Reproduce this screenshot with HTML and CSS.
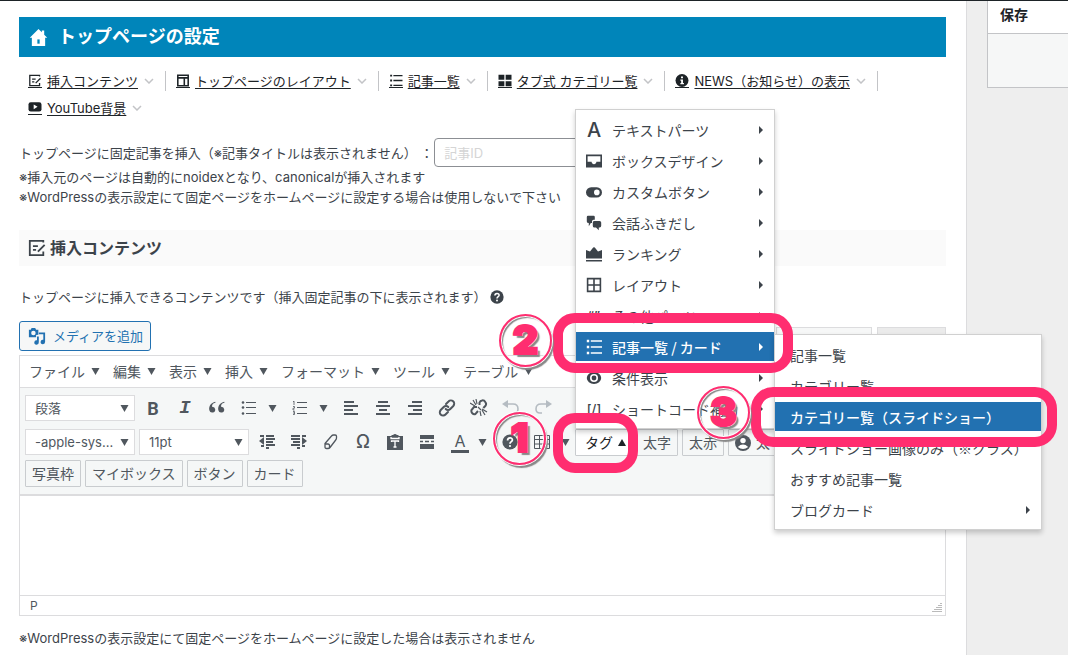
FILE: index.html
```html
<!DOCTYPE html>
<html lang="ja">
<head>
<meta charset="utf-8">
<title>トップページの設定</title>
<link rel="stylesheet" href="styles.css">
</head>
<body>
<svg class="sprite" aria-hidden="true">
  <symbol id="home" viewBox="0 0 20 20"><path d="M10 1 .8 10.2H3V19h14v-8.800h2.200L16 7V2.500h-2.500v2z" fill="currentColor"/><path d="M8.800 12h2.400v4.500H8.800z" fill="#0085ba"/></symbol>
  <symbol id="note" viewBox="0 0 20 20"><g fill="none" stroke="currentColor" stroke-width="2"><path d="M17 4V2H2v16h15v-4M5.500 8H11M5.500 12H9"/><path d="m11 14 7.500-7.500"/></g></symbol>
  <symbol id="layout" viewBox="0 0 20 20"><path d="M2 2h16v16H2zM2 6h16M12 6v12" fill="none" stroke="currentColor" stroke-width="2.400"/></symbol>
  <symbol id="list" viewBox="0 0 20 20"><path d="M6 2.500h14M6 10h14M6 17.500h14" stroke="currentColor" stroke-width="2"/><path d="M1 1h3v3H1zM1 8.500h3v3H1zM1 16h3v3H1z" fill="currentColor"/></symbol>
  <symbol id="grid" viewBox="0 0 20 20"><path d="M0 1h9v8H0zM11 1h9v8h-9zM0 11h9v8H0zM11 11h9v8h-9z" fill="currentColor"/></symbol>
  <symbol id="info" viewBox="0 0 20 20"><circle cx="10" cy="10" r="10" fill="currentColor"/><path d="M8.500 4h3v2.500h-3zM7.500 8.500h4V14H13v1.700H7.500V14h1.200v-3.700H7.500z" fill="#fff"/></symbol>
  <symbol id="tube" viewBox="0 0 20 20"><rect y="2" width="20" height="14" rx="3.500" fill="currentColor"/><path d="m8 5.500 6 3.500-6 3.500z" fill="#fff"/></symbol>
  <symbol id="chev" viewBox="0 0 10 6"><path d="m1 1 4 4 4-4" fill="none" stroke="#c3c4c7" stroke-width="1.500"/></symbol>
  <symbol id="down" viewBox="0 0 8 7"><path d="M0 0h8L4 7z" fill="currentColor"/></symbol>
  <symbol id="up" viewBox="0 0 8 7"><path d="M0 7h8L4 0z" fill="currentColor"/></symbol>
  <symbol id="right" viewBox="0 0 4 8"><path d="M0 0v8l4-4z" fill="currentColor"/></symbol>
  <symbol id="help" viewBox="0 0 20 20"><circle cx="10" cy="10" r="9.500" fill="currentColor"/><path d="M7 8c0-4 6-4 6-.6 0 2.200-3 2-3 4.800" fill="none" stroke="#fff" stroke-width="2.200"/><circle cx="10" cy="15" r="1.400" fill="#fff"/></symbol>
  <symbol id="media" viewBox="0 0 20 20"><path fill-rule="evenodd" d="M1 3h2l1-2h4l1 2h2.500v5.500L9 9v2.500H1zM6 4.300a2.500 2.500 0 1 0 0 5 2.500 2.500 0 0 0 0-5z" fill="currentColor"/><path d="M12 6h7v10.500a2.500 2.500 0 1 1-2-2.300V8h-5zM10 10.500h2V17a2.500 2.500 0 1 1-2-2.300z" fill="currentColor"/></symbol>
  <symbol id="tray" viewBox="0 0 20 20"><path fill-rule="evenodd" d="M0 2h20v16H0zM2 4v7h5c0 4 6 4 6 0h5V4z" fill="currentColor"/></symbol>
  <symbol id="toggle" viewBox="0 0 20 20"><rect y="4" width="20" height="13" rx="6.500" fill="currentColor"/><circle cx="13.500" cy="10.500" r="3.500" fill="#fff"/></symbol>
  <symbol id="chat" viewBox="0 0 20 20"><path d="M2.500 1h7Q11 1 11 2.500V6H9.500Q7.500 6 7.500 8v2H6l-2.500 4V10Q1 10 1 8V2.500Q1 1 2.500 1zM10 7.500h7q2 0 2 2v4q0 2-2 2h-1V19l-3.500-3.500H10q-1.500 0-1.500-2v-4q0-2 1.500-2z" fill="currentColor"/></symbol>
  <symbol id="crown" viewBox="0 0 20 20"><path d="M0 5l5 2 3-4q2-3 4 0l3 4 5-2v10.500H0zM0 17.500h20v1.800H0z" fill="currentColor"/></symbol>
  <symbol id="window" viewBox="0 0 20 20"><path d="M2 2h16v16H2zM10 2v16M2 10h16" fill="none" stroke="currentColor" stroke-width="2"/></symbol>
  <symbol id="eye" viewBox="0 0 20 20"><ellipse cx="10" cy="10" rx="9" ry="7.500" fill="currentColor"/><circle cx="10" cy="10" r="5" fill="#fff"/><circle cx="10" cy="10" r="3" fill="currentColor"/></symbol>
  <symbol id="user" viewBox="0 0 20 20"><circle cx="10" cy="10" r="10" fill="currentColor"/><circle cx="10" cy="7" r="3.400" fill="#fff"/><path d="M3.500 15q6.500-6 13 0-6.500 5-13 0z" fill="#fff"/></symbol>
  <symbol id="quote" viewBox="0 0 20 20"><path d="M8.500 4C5 5 4.500 7 4.500 8.500a3.300 3.300 0 1 1-3 4C.5 8 3.500 4 8 3zM18.500 4c-3.500 1-4 3-4 4.500a3.300 3.300 0 1 1-3 4C10.500 8 13.500 4 18 3z" fill="currentColor"/></symbol>
  <symbol id="ul" viewBox="0 0 16 16"><path d="M5 2.500h10M5 7.500h10M5 13.500h10" stroke="currentColor"/><circle cx="2" cy="2.500" r="1.300" fill="currentColor"/><circle cx="2" cy="7.500" r="1.300" fill="currentColor"/><circle cx="2" cy="13.500" r="1.300" fill="currentColor"/></symbol>
  <symbol id="ol" viewBox="0 0 16 16"><path d="M5 2.500h10M5 7.500h10M5 13.500h10" stroke="currentColor"/><path d="m1 2 1-1v4M1 6.500h1.500v1.700H1V10h1.500M1 11.500h1.500v3H1M1 13h1.500" fill="none" stroke="currentColor" stroke-width=".8"/></symbol>
  <symbol id="al" viewBox="0 0 16 16"><path d="M1 2h10M1 6h14M1 10h9M1 14h14" stroke="currentColor" stroke-width="2"/></symbol>
  <symbol id="ac" viewBox="0 0 16 16"><path d="M3 2h10M1 6h14M4 10h8M1 14h14" stroke="currentColor" stroke-width="2"/></symbol>
  <symbol id="ar" viewBox="0 0 16 16"><path d="M5 2h10M1 6h14M6 10h9M1 14h14" stroke="currentColor" stroke-width="2"/></symbol>
  <symbol id="link" viewBox="0 0 18 18"><g fill="none" stroke="currentColor" stroke-width="2" stroke-linecap="round"><path d="m8 5 2.500-2.500a3.200 3.200 0 0 1 4.800 4.500l-3 3a3.200 3.200 0 0 1-4.600 0"/><path d="m10 13-2.500 2.500A3.200 3.200 0 0 1 2.700 11l3-3a3.200 3.200 0 0 1 4.600 0"/></g></symbol>
  <symbol id="unlink" viewBox="0 0 18 18"><g fill="none" stroke="currentColor" stroke-width="2"><path d="M9.500 6V3.500a3.200 3.200 0 0 1 5.800-.5 3.200 3.200 0 0 1 0 4l-2 2M8 12l-2.500 3A3.200 3.200 0 0 1 1.500 11l2.500-3h3"/><path d="m3 1 3 5M6 0l1 5M0 4l5 3M10 12l1 5M12 11l3 5M12 10l5 3M8 8l3 3" stroke-width="1.200"/></g></symbol>
  <symbol id="undo" viewBox="0 0 18 18"><path d="M5 5h6q5 0 5 5 0 4-4 4" fill="none" stroke="currentColor" stroke-width="1.600"/><path d="M6 1v8L0 5z" fill="currentColor"/></symbol>
  <symbol id="redo" viewBox="0 0 18 18"><path d="M13 5H7q-5 0-5 5 0 4 4 4h2" fill="none" stroke="currentColor" stroke-width="1.600"/><path d="M12 1v8l6-4z" fill="currentColor"/></symbol>
  <symbol id="outdent" viewBox="0 0 16 16"><path d="M1 2h4M7 2h8M7 5h9M7 8h7M7 11h9M2 12h3M7 14h3" stroke="currentColor" stroke-width="2"/><path d="M5 3v8L0 7z" fill="currentColor"/></symbol>
  <symbol id="indent" viewBox="0 0 16 16"><path d="M0 2h9M0 5h9M2 8h7M0 11h9M11 2h4M11 12h3M6 14h3" stroke="currentColor" stroke-width="2"/><path d="M11 3v8l5-4z" fill="currentColor"/></symbol>
  <symbol id="eraser" viewBox="0 0 16 16"><path d="M2 9.500 8.500 2q.8-1 2-1h1.700q1.300 0 1.300 1.300V4q0 1-.8 2L7 13.500q-.8 1-2 1H3.500q-1.500 0-1.500-1.500zM2 10h3q1.500 0 1.500 1.500V14" fill="none" stroke="currentColor" stroke-width="1.300"/></symbol>
  <symbol id="paste" viewBox="0 0 16 16"><path d="M0 2h4l1-1h1q2-2 4 0h1l1 1h4v14H0z" fill="currentColor"/><path d="M4 3v1.500h8V3M4.500 8V7h7v1M8 7v6.500M6.500 13h3" fill="none" stroke="#fff" stroke-width="1.300"/></symbol>
  <symbol id="more" viewBox="0 0 16 16"><path d="M1 1h14v4H1zM1 10h14v5H1z" fill="currentColor"/><path d="M1 7.500h3M6 7.500h4M12 7.500h3" stroke="currentColor" stroke-width="1.500"/></symbol>
  <symbol id="table" viewBox="0 0 16 16"><path d="M.5 1.500h15v13H.5zM.5 5.500h15M.5 10h15M5.500 1.500v13M10.500 1.500v13" fill="none" stroke="currentColor"/></symbol>
</svg>

<div class="page">
  <main class="main">
    <h1 class="title"><svg class="i20"><use href="#home"/></svg>トップページの設定</h1>

    <nav class="anchors">
      <a href="#insert"><svg class="i14"><use href="#note"/></svg><span>挿入コンテンツ</span><svg class="chev"><use href="#chev"/></svg></a>
      <a href="#layout-top"><svg class="i14"><use href="#layout"/></svg><span>トップページのレイアウト</span><svg class="chev"><use href="#chev"/></svg></a>
      <a href="#posts"><svg class="i14"><use href="#list"/></svg><span>記事一覧</span><svg class="chev"><use href="#chev"/></svg></a>
      <a href="#tabs"><svg class="i14"><use href="#grid"/></svg><span>タブ式 カテゴリー覧</span><svg class="chev"><use href="#chev"/></svg></a>
      <a href="#news"><svg class="i14"><use href="#info"/></svg><span>NEWS（お知らせ）の表示</span><svg class="chev"><use href="#chev"/></svg></a>
      <a href="#youtube"><svg class="i14"><use href="#tube"/></svg><span>YouTube背景</span><svg class="chev"><use href="#chev"/></svg></a>
    </nav>

    <div class="field">
      <label for="post-id">トップページに固定記事を挿入（※記事タイトルは表示されません） ：</label>
      <input id="post-id" type="text" placeholder="記事ID">
    </div>
    <p class="text">※挿入元のページは自動的にnoidexとなり、canonicalが挿入されます<br>※WordPressの表示設定にて固定ページをホームページに設定する場合は使用しないで下さい</p>

    <h2 class="section" id="insert"><svg class="i18"><use href="#note"/></svg>挿入コンテンツ</h2>
    <p class="text lead">トップページに挿入できるコンテンツです（挿入固定記事の下に表示されます）<svg class="i14"><use href="#help"/></svg></p>

    <div class="tools">
      <button class="media" type="button"><svg class="i18"><use href="#media"/></svg>メディアを追加</button>
      <div class="tabs"><button class="tab tab-on" type="button" aria-label="ビジュアル"></button><button class="tab" type="button" aria-label="テキスト"></button></div>
    </div>

    <div class="editor">
      <div class="menubar">
        <button type="button">ファイル<svg class="caret"><use href="#down"/></svg></button>
        <button type="button">編集<svg class="caret"><use href="#down"/></svg></button>
        <button type="button">表示<svg class="caret"><use href="#down"/></svg></button>
        <button type="button">挿入<svg class="caret"><use href="#down"/></svg></button>
        <button type="button">フォーマット<svg class="caret"><use href="#down"/></svg></button>
        <button type="button">ツール<svg class="caret"><use href="#down"/></svg></button>
        <button type="button">テーブル<svg class="caret"><use href="#down"/></svg></button>
      </div>

      <div class="toolbar">
        <div class="row">
          <div class="pick"><select aria-label="書式"><option>段落</option></select><svg class="caret"><use href="#down"/></svg></div>
          <div class="set">
            <button class="tool bold" type="button">B</button>
            <button class="tool italic" type="button">I</button>
            <button class="tool" type="button" aria-label="引用"><svg class="i18"><use href="#quote"/></svg></button>
            <button class="tool split" type="button" aria-label="箇条書き"><svg class="i16"><use href="#ul"/></svg><svg class="caret"><use href="#down"/></svg></button>
            <button class="tool split" type="button" aria-label="番号付きリスト"><svg class="i16"><use href="#ol"/></svg><svg class="caret"><use href="#down"/></svg></button>
            <button class="tool" type="button" aria-label="左寄せ"><svg class="i16"><use href="#al"/></svg></button>
            <button class="tool" type="button" aria-label="中央揃え"><svg class="i16"><use href="#ac"/></svg></button>
            <button class="tool" type="button" aria-label="右寄せ"><svg class="i16"><use href="#ar"/></svg></button>
            <button class="tool" type="button" aria-label="リンク"><svg class="i18"><use href="#link"/></svg></button>
            <button class="tool" type="button" aria-label="リンク解除"><svg class="i18"><use href="#unlink"/></svg></button>
            <button class="tool off" type="button" aria-label="取り消し"><svg class="i18"><use href="#undo"/></svg></button>
            <button class="tool off" type="button" aria-label="やり直し"><svg class="i18"><use href="#redo"/></svg></button>
          </div>
        </div>
        <div class="row">
          <div class="pick"><select aria-label="フォント"><option>-apple-sys...</option></select><svg class="caret"><use href="#down"/></svg></div>
          <div class="pick"><select aria-label="サイズ"><option>11pt</option></select><svg class="caret"><use href="#down"/></svg></div>
          <div class="set">
            <button class="tool" type="button" aria-label="インデント解除"><svg class="i16"><use href="#outdent"/></svg></button>
            <button class="tool" type="button" aria-label="インデント"><svg class="i16"><use href="#indent"/></svg></button>
            <button class="tool" type="button" aria-label="書式クリア"><svg class="i16"><use href="#eraser"/></svg></button>
            <button class="tool omega" type="button">Ω</button>
            <button class="tool" type="button" aria-label="貼り付け"><svg class="i16"><use href="#paste"/></svg></button>
            <button class="tool" type="button" aria-label="続きを読む"><svg class="i16"><use href="#more"/></svg></button>
            <button class="tool split" type="button"><span class="color">A</span><svg class="caret"><use href="#down"/></svg></button>
            <button class="tool" type="button" aria-label="ヘルプ"><svg class="i16"><use href="#help"/></svg></button>
            <button class="tool split" type="button" aria-label="表"><svg class="i16"><use href="#table"/></svg><svg class="caret"><use href="#down"/></svg></button>
          </div>
          <div class="drop">
            <button class="btn open" type="button">タグ<svg class="caret-up"><use href="#up"/></svg></button>
            <div class="menu main-menu">
              <button type="button"><b class="glyph-a">A</b>テキストパーツ<svg class="arrow"><use href="#right"/></svg></button>
              <button type="button"><svg class="i16"><use href="#tray"/></svg>ボックスデザイン<svg class="arrow"><use href="#right"/></svg></button>
              <button type="button"><svg class="i16"><use href="#toggle"/></svg>カスタムボタン<svg class="arrow"><use href="#right"/></svg></button>
              <button type="button"><svg class="i16"><use href="#chat"/></svg>会話ふきだし<svg class="arrow"><use href="#right"/></svg></button>
              <button type="button"><svg class="i16"><use href="#crown"/></svg>ランキング<svg class="arrow"><use href="#right"/></svg></button>
              <button type="button"><svg class="i16"><use href="#window"/></svg>レイアウト<svg class="arrow"><use href="#right"/></svg></button>
              <button type="button"><b class="code">“”</b>その他パーツ<svg class="arrow"><use href="#right"/></svg></button>
              <div class="drop">
                <button class="active" type="button"><svg class="i16"><use href="#list"/></svg>記事一覧 / カード<svg class="arrow"><use href="#right"/></svg></button>
                <div class="menu sub-menu">
                  <button type="button">記事一覧</button>
                  <button type="button">カテゴリー覧</button>
                  <button class="active" type="button">カテゴリー覧（スライドショー）</button>
                  <button type="button">スライドショー画像のみ（※クラス）</button>
                  <button type="button">おすすめ記事一覧</button>
                  <button type="button">ブログカード<svg class="arrow"><use href="#right"/></svg></button>
                </div>
              </div>
              <button type="button"><svg class="i16"><use href="#eye"/></svg>条件表示<svg class="arrow"><use href="#right"/></svg></button>
              <button type="button"><b class="code">[/]</b>ショートコード補助<svg class="arrow"><use href="#right"/></svg></button>
            </div>
          </div>
          <button class="btn" type="button">太字</button>
          <button class="btn" type="button">太赤</button>
          <button class="btn" type="button"><svg class="i16"><use href="#user"/></svg>太字</button>
        </div>
        <div class="row">
          <button class="btn" type="button">写真枠</button>
          <button class="btn" type="button">マイボックス</button>
          <button class="btn" type="button">ボタン</button>
          <button class="btn" type="button">カード</button>
        </div>
      </div>
      <div class="canvas" contenteditable="true" role="textbox" aria-label="本文"></div>
      <div class="status">P<svg class="grip" viewBox="0 0 10 10"><path d="M9 0v10M7 2v8M5 4v6M3 6v4M1 8v2" stroke="#777" stroke-dasharray="1 1"/></svg></div>
    </div>
    <p class="text after">※WordPressの表示設定にて固定ページをホームページに設定した場合は表示されません</p>
  </main>

  <aside class="side">
    <section class="card">
      <h2>保存</h2>
      <div class="card-body"></div>
    </section>
  </aside>

  <div class="frame frame-1"></div><div class="frame frame-2"></div><div class="frame frame-3"></div>
  <div class="step step-1">1</div><div class="step step-2">2</div><div class="step step-3">3</div>
</div>
</body>
</html>
```

FILE: styles.css
```css
* { box-sizing: border-box; }
body {
  margin: 0;
  overflow: hidden;
  background: #eee;
  color: #3c434a;
  font: 13px/20px Inter, "Noto Sans CJK JP", sans-serif;
}
button, input, select { font: inherit; color: inherit; margin: 0; }
button { display: flex; align-items: center; border: 0; background: none; padding: 0; white-space: nowrap; }
h1, h2, p { margin: 0; }
svg { flex: none; display: block; }
.sprite { position: absolute; width: 0; height: 0; }
.i14 { width: 14px; height: 14px; }
.i16 { width: 16px; height: 16px; }
.i18 { width: 18px; height: 18px; }
.i20 { width: 19px; height: 19px; }

.page { position: relative; display: flex; min-height: 100vh; border-top: 1px solid #1d2327; }
.main { flex: 1; min-width: 0; padding: 16px 20px 0 19px; background: #fff; border-right: 1px solid #dcdcde; }
.side { width: 101px; padding-left: 20px; overflow: hidden; }

.title { display: flex; align-items: center; gap: 10px; height: 40px; padding-left: 10px; background: #0085ba; color: #fff; font-size: 18px; }

.anchors { display: flex; flex-wrap: wrap; gap: 7px 10px; margin-top: 14px; padding-left: 9px; }
.anchors a { display: flex; align-items: center; height: 20px; padding-right: 11px; border-right: 1px solid #c3c4c7; color: #1d2327; text-decoration: none; }
.anchors a:last-child { border: 0; }
.anchors span { margin: 0 6px 0 5px; text-decoration: underline; text-underline-offset: 2px; }
.anchors .i14 { border-bottom: 1px solid #1d2327; }
.chev { width: 10px; height: 6px; }

.field { display: flex; align-items: center; gap: 1px; margin-top: 20px; }
.field input { width: 200px; height: 29px; padding: 0 9px; border: 1px solid #8c8f94; border-radius: 4px; background: #fff; }
.field input::placeholder { color: #d5d5d5; }
.section { display: flex; align-items: center; gap: 4px; height: 36px; margin-top: 23px; padding-left: 9px; background: #fafafa; font-size: 16px; }
.lead { display: flex; align-items: center; gap: 4px; margin-top: 21px; }

.tools { display: flex; justify-content: space-between; margin-top: 14px; }
.media { height: 30px; margin-bottom: 4px; padding: 0 7px 0 8px; gap: 7px; border: 1px solid #2271b1; border-radius: 3px; background: #f6f7f7; color: #2271b1; }
.tabs { display: flex; gap: 5px; align-items: flex-end; }
.tab { width: 69px; height: 28px; border: 1px solid #dcdcde; border-bottom: 0; background: #ebebeb; }
.tab-on { width: 96px; background: #f6f7f7; }

.editor { border: 1px solid #dcdcde; font-size: 14px; color: #50575e; }
.menubar { display: flex; gap: 13px; height: 32px; padding-left: 9px; border-bottom: 1px solid #dcdcde; }
.menubar button { gap: 6px; }
.caret { width: 9px; height: 7px; }
.caret-up { width: 8px; height: 7px; color: #1d2327; }
.toolbar { display: flex; flex-direction: column; gap: 4px; padding: 7px 5px 7px; background: #f5f7f7; border-bottom: 2px solid #dcdcde; }
.row { display: flex; gap: 4px; height: 27px; }
.row:first-child { margin-bottom: 3px; }
.pick { position: relative; width: 110px; }
.pick select { width: 100%; height: 26px; padding: 0 9px; appearance: none; border: 1px solid #dcdcde; border-radius: 0; background: #fff; font-size: 13px; }
.pick .caret { position: absolute; right: 6px; top: 10px; }
.set { display: flex; margin: 0 -6px 0 -2px; }
.tool { width: 32px; height: 26px; justify-content: center; }
.split { width: 51px; justify-content: flex-start; padding-left: 8px; gap: 11px; }
.bold { font: 700 18px Roboto, sans-serif; }
.italic { font: italic 700 19px "Liberation Mono", monospace; }
.omega { font-size: 18px; font-weight: 500; }
.off { color: #b5bcc2; }
.color { width: 18px; margin-right: -2px; border-bottom: 3px solid #50575e; font-size: 16px; line-height: 18px; text-align: center; }
.btn { height: 27px; padding: 0 6px; gap: 5px; border: 1px solid #c9cccf; border-radius: 1px; }
.btn.open { padding: 0 5px 0 9px; background: #fff; color: #1d2327; }
.drop { position: relative; }

.menu { position: absolute; display: flex; flex-direction: column; gap: 2px; padding: 5px 0; border: 1px solid #d0d0d0; background: #fff; box-shadow: 0 3px 5px rgba(0, 0, 0, .2); color: #3c434a; font-family: "Noto Sans CJK JP", sans-serif; }
.menu button { width: 100%; height: 29px; padding: 0 11px 0 10px; gap: 10px; }
.main-menu { left: 0; bottom: 100%; width: 200px; z-index: 1; }
.sub-menu { left: 198px; top: 2px; width: 268px; }
.menu .sub-menu button { padding-left: 15px; }
.menu .active { background: #2271b1; color: #fff; font-weight: 500; }
.arrow { width: 4px; height: 8px; margin-left: auto; }
.glyph-a { width: 16px; font: 500 20px Inter, sans-serif; text-align: center; }
.code { width: 16px; font: 500 13px Inter, sans-serif; text-align: center; }

.canvas { height: 99px; outline: 0; background: #fff; }
.status { display: flex; justify-content: space-between; align-items: center; height: 20px; padding: 0 3px 0 10px; border-top: 1px solid #dcdcde; font-size: 12px; }
.grip { width: 10px; height: 10px; margin-top: 4px; }
.after { margin-top: 12px; }

.card { border: 1px solid #c3c4c7; border-width: 0 0 1px 1px; background: #f6f7f7; }
.card h2 { height: 33px; padding: 4px 12px; border-bottom: 1px solid #c3c4c7; background: #fff; color: #1d2327; font-size: 14px; }
.card-body { height: 53px; }

/* tutorial marks laid over the screen */
.frame { position: absolute; z-index: 2; border: 10px solid #ff2d70; border-radius: 22px; height: 60px; pointer-events: none; }
.frame-1 { left: 553px; top: 412px; width: 85px; }
.frame-2 { left: 553px; top: 312px; width: 240px; }
.frame-3 { left: 751px; top: 386px; width: 306px; }
.step {
  position: absolute; z-index: 3; width: 53px; height: 53px; border: 2px solid #ff2d70; border-radius: 50%;
  box-shadow: 0 0 0 1px #fff, inset 0 0 0 1px #fff, 2px 3px 1px #888, inset 2px 2px 1px #888;
  color: #ff2d70; font: 900 40px/48px Inter, sans-serif; text-align: center;
  text-shadow: 1px 1px #fff, 3px 3px 1px #888; -webkit-text-stroke: 2px #ff2d70;
}
.step-1 { left: 493px; top: 411px; }
.step-2 { left: 499px; top: 313px; }
.step-3 { left: 697px; top: 385px; }
```
